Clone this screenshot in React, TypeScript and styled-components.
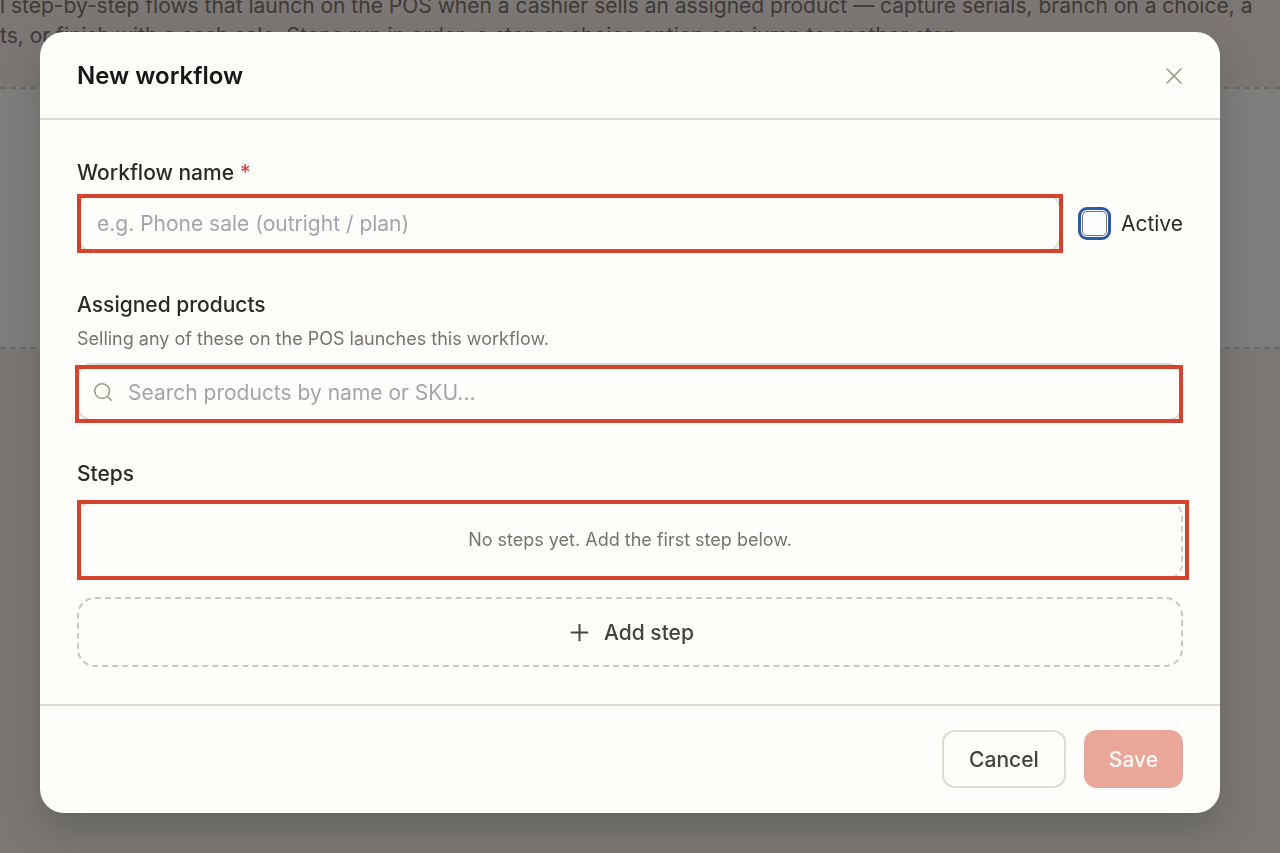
import React, { useState } from "react";
import styled, { createGlobalStyle } from "styled-components";
import { Plus, Search, X } from "lucide-react";

const GlobalStyle = createGlobalStyle`
  *, *::before, *::after { box-sizing: border-box; }
  body {
    margin: 0;
    background: #f8efe8;
    font-family: Inter, "Liberation Sans", sans-serif;
  }
  button, input { font: inherit; }
`;

const Page = styled.main`
  min-height: 100vh;
  overflow: hidden;
`;

const Intro = styled.p`
  margin: -9px 0 0;
  padding-bottom: 36px;
  font-size: 21px;
  line-height: 30px;
  color: #7c746a;
  white-space: nowrap;
`;

const IntroLine = styled.span`
  display: block;
`;

const EmptyList = styled.section`
  height: 262px;
  background: #fffcf9;
  border: dashed #d4d0c8;
  border-width: 2px 0;
`;

const Overlay = styled.div`
  position: fixed;
  inset: 0;
  padding: 32px 60px 40px 40px;
  background: rgba(0, 0, 0, 0.5);
  overflow: auto;
`;

const Dialog = styled.form`
  background: #fffefa;
  border-radius: 24px;
  box-shadow: 0 18px 40px rgba(50, 60, 60, 0.32);
`;

const Header = styled.header`
  display: flex;
  align-items: center;
  justify-content: space-between;
  padding: 25px 37px 24px;
  border-bottom: 2px solid #dcdbcf;
`;

const Title = styled.h2`
  margin: 0;
  font-size: 24px;
  line-height: 37px;
  font-weight: 600;
  color: #171717;
`;

const CloseButton = styled.button`
  display: flex;
  padding: 0;
  border: 0;
  background: none;
  color: #a19c8b;
  margin-right: -5px;
`;

const Body = styled.div`
  display: flex;
  flex-direction: column;
  gap: 37px;
  padding: 37px;
`;

const Section = styled.section`
  display: flex;
  flex-direction: column;
`;

const labelText = `
  font-size: 21px;
  line-height: 31px;
  font-weight: 500;
  color: #2a2a28;
`;

const Label = styled.label`
  ${labelText}
`;

const StepsHeading = styled.h3`
  margin: 0;
  ${labelText}
`;

const Required = styled.span`
  color: #cf4a3f;
`;

const Hint = styled.p`
  margin: 6px 0 0;
  font-size: 18px;
  line-height: 26px;
  color: #76736a;
`;

const NameRow = styled.div`
  display: flex;
  align-items: center;
  gap: 21px;
  margin-top: 6px;
`;

const Highlighted = styled.div<{ $inset: string }>`
  position: relative;
  flex: 1;

  &::after {
    content: "";
    position: absolute;
    inset: ${(p) => p.$inset};
    border: 4px solid #d5432f;
    pointer-events: none;
  }
`;

const TextInput = styled.input<{ $icon?: boolean }>`
  display: block;
  width: 100%;
  height: 58px;
  padding: 0 18px 0 ${(p) => (p.$icon ? 49 : 18)}px;
  border: 2px solid #dcdbcf;
  border-radius: 15px;
  background: transparent;
  font-size: 21px;
  color: #2a2a28;
  outline: none;

  &::placeholder {
    color: #a2a5ad;
    opacity: 1;
  }
`;

const SearchIcon = styled(Search)`
  position: absolute;
  left: 15px;
  top: 18px;
  color: #a19c8b;
`;

const ActiveLabel = styled.label`
  display: flex;
  align-items: center;
  gap: 14px;
  padding-top: 1px;
  font-size: 21px;
  line-height: 31px;
  color: #2a2a28;
`;

const Checkbox = styled.input`
  appearance: none;
  width: 25px;
  height: 25px;
  margin: 0;
  border: 1px solid #76706f;
  border-radius: 5px;
  background: #ffffff;
  outline: 3px solid #2d58a8;
  outline-offset: 1px;

  &:checked {
    background: #2d58a8;
  }
`;

const SearchSlot = styled.div`
  display: flex;
  margin-top: 11px;
`;

const StepsStack = styled.div`
  display: flex;
  flex-direction: column;
  gap: 18px;
  margin-top: 12px;
`;

const EmptySteps = styled.p`
  margin: 0;
  padding: 24px;
  border: 2px dashed #d0cec6;
  border-radius: 15px;
  font-size: 18px;
  line-height: 26px;
  text-align: center;
  color: #76736a;
`;

const AddButton = styled.button`
  display: flex;
  align-items: center;
  justify-content: center;
  gap: 11px;
  min-height: 70px;
  padding: 0 18px;
  border: 2px dashed #cac8c0;
  border-radius: 18px;
  background: none;
  font-size: 21px;
  line-height: 31px;
  font-weight: 500;
  color: #45433e;
`;

const Footer = styled.footer`
  display: flex;
  justify-content: flex-end;
  gap: 18px;
  padding: 24px 37px 25px;
  border-top: 2px solid #dcdbcf;
`;

const Button = styled.button<{ $primary?: boolean }>`
  min-height: 58px;
  padding: 0 25px;
  border: ${(p) => (p.$primary ? "0" : "2px solid #dcdbcf")};
  border-radius: 13px;
  background: ${(p) => (p.$primary ? "#eaa699" : "#fffefa")};
  color: ${(p) => (p.$primary ? "#fffaf4" : "#45433e")};
  font-size: 21px;
  line-height: 31px;
  font-weight: 500;
`;

export default function App() {
  const [active, setActive] = useState(false);

  return (
    <>
      <GlobalStyle />
      <Page>
        <Intro>
          <IntroLine>
            l step-by-step flows that launch on the POS when a cashier sells an assigned product — capture serials, branch on a choice, a
          </IntroLine>
          <IntroLine>
            ts, or finish with a cash sale. Steps run in order; a step or choice option can jump to another step.
          </IntroLine>
        </Intro>
        <EmptyList />
      </Page>
      <Overlay>
        <Dialog
          role="dialog"
          aria-labelledby="dialog-title"
          onSubmit={(e: React.FormEvent) => e.preventDefault()}
        >
          <Header>
            <Title id="dialog-title">New workflow</Title>
            <CloseButton type="button" aria-label="Close">
              <X size={28} strokeWidth={1.5} />
            </CloseButton>
          </Header>
          <Body>
            <Section>
              <Label htmlFor="workflow-name">
                Workflow name <Required>*</Required>
              </Label>
              <NameRow>
                <Highlighted $inset="0 -2px -1px 0">
                  <TextInput id="workflow-name" placeholder="e.g. Phone sale (outright / plan)" />
                </Highlighted>
                <ActiveLabel>
                  <Checkbox
                    type="checkbox"
                    checked={active}
                    onChange={(e) => setActive(e.target.checked)}
                  />
                  Active
                </ActiveLabel>
              </NameRow>
            </Section>
            <Section>
              <Label htmlFor="product-search">Assigned products</Label>
              <Hint>Selling any of these on the POS launches this workflow.</Hint>
              <SearchSlot>
                <Highlighted $inset="2px 0 -2px -2px">
                  <SearchIcon size={22} strokeWidth={1.75} />
                  <TextInput id="product-search" $icon placeholder="Search products by name or SKU..." />
                </Highlighted>
              </SearchSlot>
            </Section>
            <Section>
              <StepsHeading>Steps</StepsHeading>
              <StepsStack>
                <Highlighted $inset="-1px -6px -1px 0">
                  <EmptySteps>No steps yet. Add the first step below.</EmptySteps>
                </Highlighted>
                <AddButton type="button">
                  <Plus size={27} strokeWidth={1.75} />
                  Add step
                </AddButton>
              </StepsStack>
            </Section>
          </Body>
          <Footer>
            <Button type="button">Cancel</Button>
            <Button type="submit" $primary>
              Save
            </Button>
          </Footer>
        </Dialog>
      </Overlay>
    </>
  );
}
